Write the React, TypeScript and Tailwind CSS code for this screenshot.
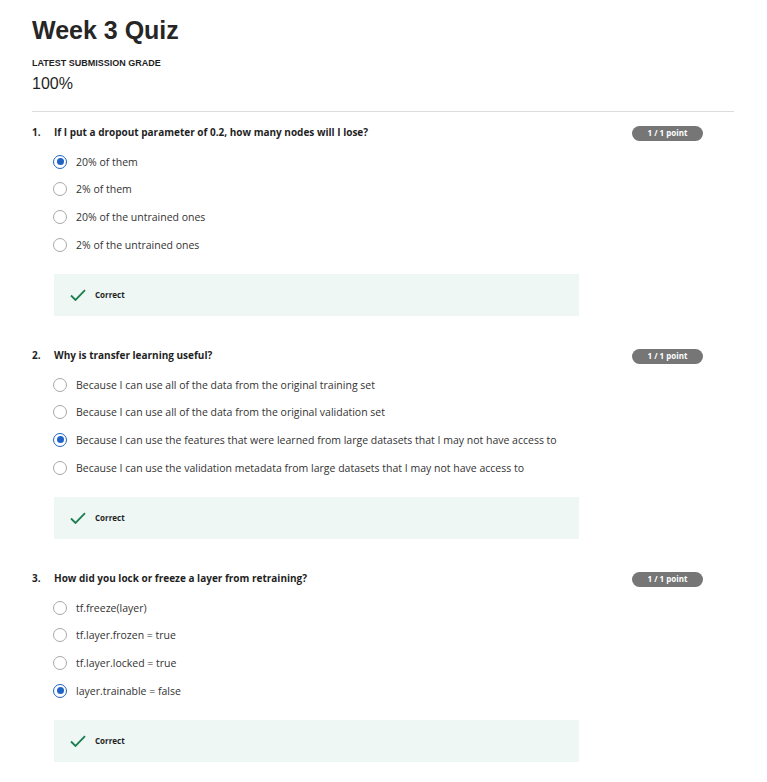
const QUESTIONS: { title: string; options: string[]; picked: number }[] = [
  {
    title: "If I put a dropout parameter of 0.2, how many nodes will I lose?",
    options: ["20% of them", "2% of them", "20% of the untrained ones", "2% of the untrained ones"],
    picked: 0,
  },
  {
    title: "Why is transfer learning useful?",
    options: [
      "Because I can use all of the data from the original training set",
      "Because I can use all of the data from the original validation set",
      "Because I can use the features that were learned from large datasets that I may not have access to",
      "Because I can use the validation metadata from large datasets that I may not have access to",
    ],
    picked: 2,
  },
  {
    title: "How did you lock or freeze a layer from retraining?",
    options: ["tf.freeze(layer)", "tf.layer.frozen = true", "tf.layer.locked = true", "layer.trainable = false"],
    picked: 3,
  },
];

function Radio({ checked }: { checked: boolean }) {
  if (checked) {
    return (
      <span className="flex h-[14px] w-[14px] shrink-0 items-center justify-center rounded-full border-[1.5px] border-[#1f64c4]">
        <span className="h-[7px] w-[7px] rounded-full bg-[#1f64c4]" />
      </span>
    );
  }
  return <span className="h-[14px] w-[14px] shrink-0 rounded-full border-[1.5px] border-[#a9a9a9]" />;
}

function Question({ n, title, options, picked }: { n: number; title: string; options: string[]; picked: number }) {
  return (
    <div className="pb-[32px]">
      <div className="flex items-start">
        <div className="flex flex-1 text-[10px] font-bold leading-[14px] text-[#1f1f1f]">
          <span className="w-[22px]">{n}.</span>
          <span>{title}</span>
        </div>
        <span className="mr-[31px] mt-[1px] flex h-[15px] w-[71px] items-center justify-center rounded-full bg-[#767676] text-[8px] font-bold text-white">
          1 / 1 point
        </span>
      </div>
      <div className="mt-[14px] flex flex-col gap-[13.7px] pl-[21px]">
        {options.map((o, i) => (
          <div key={o} className="flex h-[14px] items-center gap-[9px]">
            <Radio checked={i === picked} />
            <span className="text-[10.5px] leading-[14px] text-[#333]">{o}</span>
          </div>
        ))}
      </div>
      <div className="ml-[22px] mt-[22px] flex h-[42px] w-[525px] items-center gap-[9px] bg-[#eef7f4] pl-[16px]">
        <svg width="16" height="12" viewBox="0 0 16 12" fill="none">
          <path d="M1 6.5 L5.5 11 L15 1.2" stroke="#1c7e50" strokeWidth="1.8" />
        </svg>
        <span className="text-[8px] font-bold text-[#1f1f1f]">Correct</span>
      </div>
    </div>
  );
}

export default function App() {
  return (
    <div className="min-h-[782px] bg-white pl-[32px] pr-[33px] pt-[16px]" style={{ fontFamily: '"Open Sans", sans-serif' }}>
      <h1 className="text-[25px] font-bold leading-[28px] text-[#262626]" style={{ fontFamily: '"Liberation Sans", Arial, sans-serif' }}>
        Week 3 Quiz
      </h1>
      <div className="mt-[13px] text-[9px] font-bold uppercase text-[#1f1f1f]" style={{ fontFamily: '"Liberation Sans", Arial, sans-serif' }}>
        Latest Submission Grade
      </div>
      <div className="mt-[3px] text-[16px] leading-[20px] text-[#1f1f1f]" style={{ fontFamily: '"Liberation Sans", Arial, sans-serif' }}>
        100%
      </div>
      <div className="mt-[17px] border-t border-[#dcdcdc]" />
      <div className="pt-[13px]">
        {QUESTIONS.map((q, i) => (
          <Question key={i} n={i + 1} {...q} />
        ))}
      </div>
    </div>
  );
}
